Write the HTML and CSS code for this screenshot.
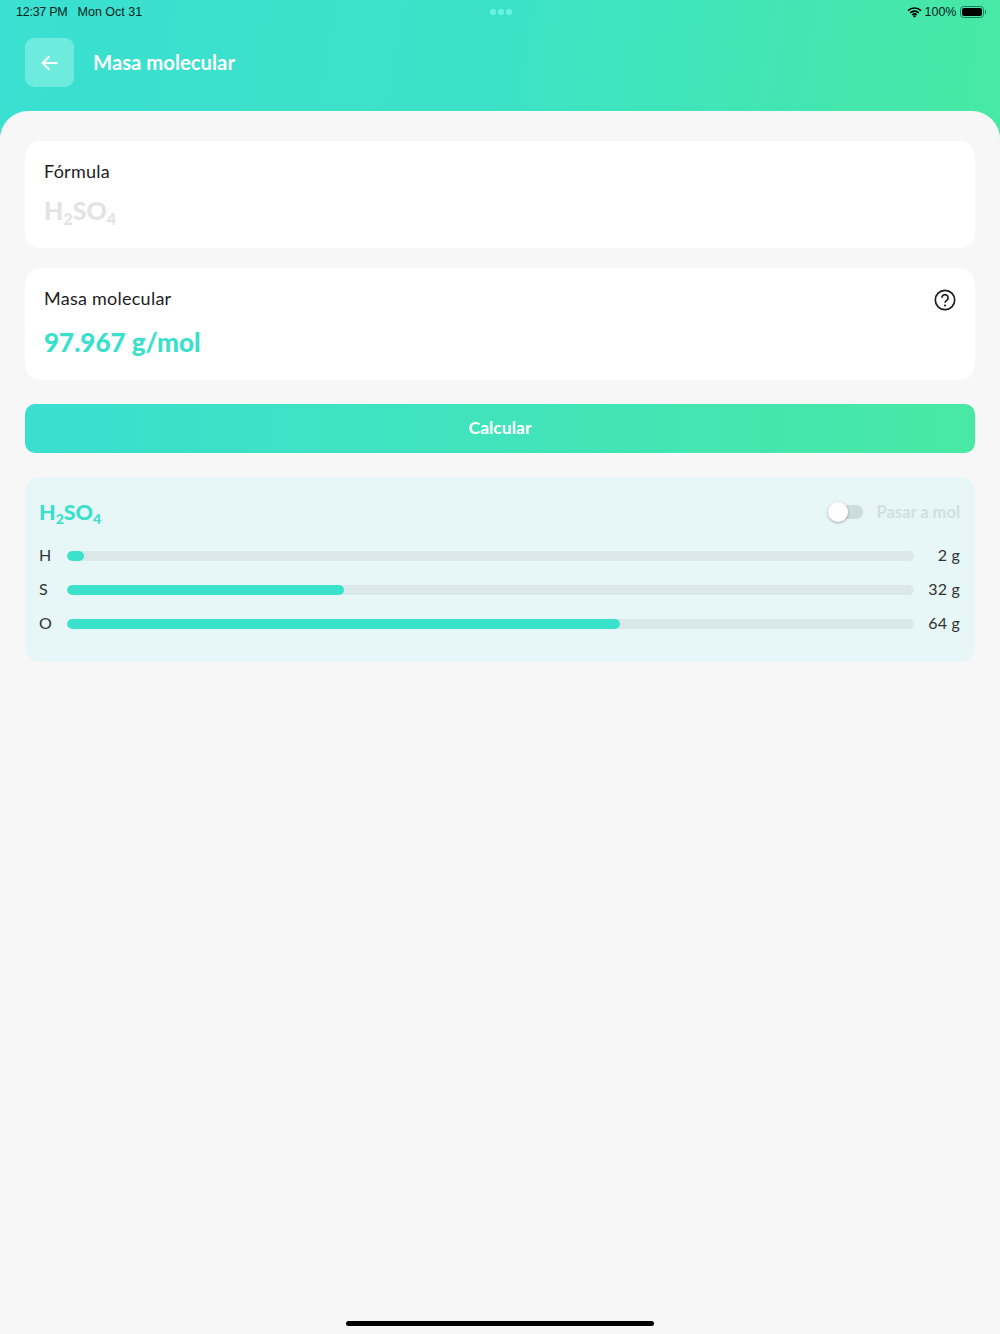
FILE: index.html
```html
<!DOCTYPE html>
<html lang="es">
<head>
<meta charset="utf-8">
<title>Masa molecular</title>
<link rel="stylesheet" href="styles.css">
</head>
<body>
<div class="page">
  <header class="top">
    <div class="status">
      <div class="status-left"><span class="time">12:37 PM</span><span>Mon Oct 31</span></div>
      <div class="dots"><i></i><i></i><i></i></div>
      <div class="status-right">
        <svg class="wifi" width="15" height="11" viewBox="0 0 15 11"><path d="M1 3.6A9.4 9.4 0 0 1 14 3.6M3.2 5.9a6.2 6.2 0 0 1 8.6 0M5.3 8a3.2 3.2 0 0 1 4.4 0" fill="none" stroke="#000" stroke-width="1.6"/><path d="M7.5 10.800 5.900 9.100a2.300 2.300 0 0 1 3.200 0z" fill="#000"/></svg>
        <span class="pct">100%</span>
        <div class="battery"><div class="battery-fill"></div></div><div class="battery-cap"></div>
      </div>
    </div>
    <div class="nav">
      <div class="back">
        <svg width="18" height="16" viewBox="0 0 18 16"><path d="M16.500 8H1.800M8.400 1.200 1.600 8l6.800 6.800" fill="none" stroke="#fff" stroke-width="2"/></svg>
      </div>
      <h1 class="title">Masa molecular</h1>
    </div>
  </header>
  <main class="sheet">
    <section class="card card-formula">
      <div class="label">Fórmula</div>
      <div class="placeholder">H<sub>2</sub>SO<sub>4</sub></div>
    </section>
    <section class="card card-mass">
      <div class="mass-head">
        <div class="label">Masa molecular</div>
        <svg class="help" width="22" height="22" viewBox="0 0 22 22"><circle cx="11" cy="11" r="9.700" fill="none" stroke="#1d1d1f" stroke-width="1.700"/><path d="M7.900 8.700a3.100 3.100 0 1 1 4.700 2.700c-1 .6-1.600 1.200-1.600 2.400" fill="none" stroke="#1d1d1f" stroke-width="1.700"/><circle cx="11" cy="16.500" r="1.100" fill="#1d1d1f"/></svg>
      </div>
      <div class="mass-value">97.967 g/mol</div>
    </section>
    <button class="calc" type="button">Calcular</button>
    <section class="panel">
      <div class="panel-head">
        <div class="panel-title">H<sub>2</sub>SO<sub>4</sub></div>
        <div class="toggle-wrap">
          <div class="toggle"><div class="knob"></div></div>
          <span class="toggle-label">Pasar a mol</span>
        </div>
      </div>
      <div class="row"><span class="el">H</span><div class="track"><div class="fill" style="width:2%"></div></div><span class="qty">2 g</span></div>
      <div class="row"><span class="el">S</span><div class="track"><div class="fill" style="width:32.700%"></div></div><span class="qty">32 g</span></div>
      <div class="row"><span class="el">O</span><div class="track"><div class="fill" style="width:65.300%"></div></div><span class="qty">64 g</span></div>
    </section>
    <div class="home"></div>
  </main>
</div>
</body>
</html>
```
FILE: styles.css
```css
* { box-sizing: border-box; }
html, body { margin: 0; padding: 0; }
body { font-family: Lato, "Open Sans", sans-serif; background: #f7f7f7; color: #1d1d1f; }
.page { width: 1000px; height: 1334px; display: flex; flex-direction: column; overflow: hidden; }
.top { height: 141px; flex: none; background: linear-gradient(100deg, #3ae0d1 0%, #3ce2c6 50%, #48e9a3 100%); }
.status { height: 24px; padding: 0 14px 0 16px; display: grid; grid-template-columns: 1fr auto 1fr; align-items: center; font-family: "Liberation Sans", sans-serif; font-size: 12.500px; color: #06201d; }
.status-left { display: flex; gap: 10px; }
.time { letter-spacing: -.25px; }
.status-right { display: flex; align-items: center; justify-content: flex-end; gap: 3px; }
.pct { font-size: 12.500px; }
.dots { display: flex; gap: 2.700px; }
.dots i { width: 5.300px; height: 5.300px; border-radius: 50%; background: #6af3e0; }
.battery { width: 24px; height: 12px; border: 1px solid #1e7a68; border-radius: 3.500px; padding: 1px; }
.battery-fill { height: 100%; background: #000; border-radius: 2px; }
.battery-cap { width: 1.500px; height: 4px; background: #1e7a68; border-radius: 0 1px 1px 0; margin-left: -2px; }
.nav { display: flex; align-items: center; gap: 19px; padding: 14px 25px 0; }
.back { width: 49px; height: 49px; border-radius: 9px; background: #6debdd; display: flex; align-items: center; justify-content: center; }
.title { margin: 0 0 2px; font-size: 20.300px; font-weight: 700; color: #fff; }
.sheet { flex: 1; margin-top: -30px; padding: 30px 25px 0; background: #f7f7f7; border-radius: 28px 28px 0 0; display: flex; flex-direction: column; }
.card { background: #fff; border-radius: 15px; padding: 19px 19px 0; }
.card-formula { height: 107px; margin-bottom: 20px; }
.card-mass { height: 112px; margin-bottom: 24px; }
.label { font-size: 18px; line-height: 22px; color: #1d1d1f; letter-spacing: .25px; }
.placeholder { margin-top: 12px; font-size: 25px; line-height: 32px; font-weight: 900; color: #e3e3e3; }
sub { font-size: .65em; line-height: 0; vertical-align: -0.3em; }
.mass-head { display: flex; justify-content: space-between; align-items: flex-start; }
.help { margin-top: 2px; flex: none; }
.mass-value { margin-top: 14px; font-size: 26px; line-height: 34px; font-weight: 900; color: #3ae0cb; }
.calc { height: 49px; flex: none; border: 0; border-radius: 10px; background: linear-gradient(90deg, #3adfd1, #48e8a4); color: #fff; font: 700 17.500px Lato, sans-serif; margin-bottom: 24px; padding: 0 0 2px; }
.panel { height: 185px; flex: none; background: #e7f6f6; border-radius: 15px; padding: 19px 15px 0 14px; }
.panel-head { height: 32px; display: flex; justify-content: space-between; align-items: center; margin-bottom: 11px; }
.panel-title { font-size: 21.500px; font-weight: 900; color: #3ae0cb; line-height: 30px; }
.toggle-wrap { display: flex; align-items: center; gap: 13px; }
.toggle { width: 35px; height: 14px; border-radius: 7px; background: #ccdcdc; position: relative; }
.knob { position: absolute; left: 0; top: -3px; width: 20px; height: 20px; border-radius: 50%; background: #fff; box-shadow: 0 1px 3px rgba(0,0,0,.3); }
.toggle-label { font-size: 16.500px; font-weight: 700; color: #cfe0e0; }
.row { height: 34px; display: flex; align-items: center; font-size: 16px; color: #333; }
.el { width: 27.700px; flex: none; padding-bottom: 4px; }
.track { flex: 1; height: 10px; border-radius: 5px; background: #dbe8e9; overflow: hidden; }
.fill { height: 100%; background: #3ae2cb; border-radius: 5px; }
.qty { width: 46.300px; flex: none; text-align: right; letter-spacing: .2px; padding-bottom: 4px; }
.home { width: 308px; height: 5px; border-radius: 3px; background: #000; margin: auto auto 8px; flex: none; }
```
